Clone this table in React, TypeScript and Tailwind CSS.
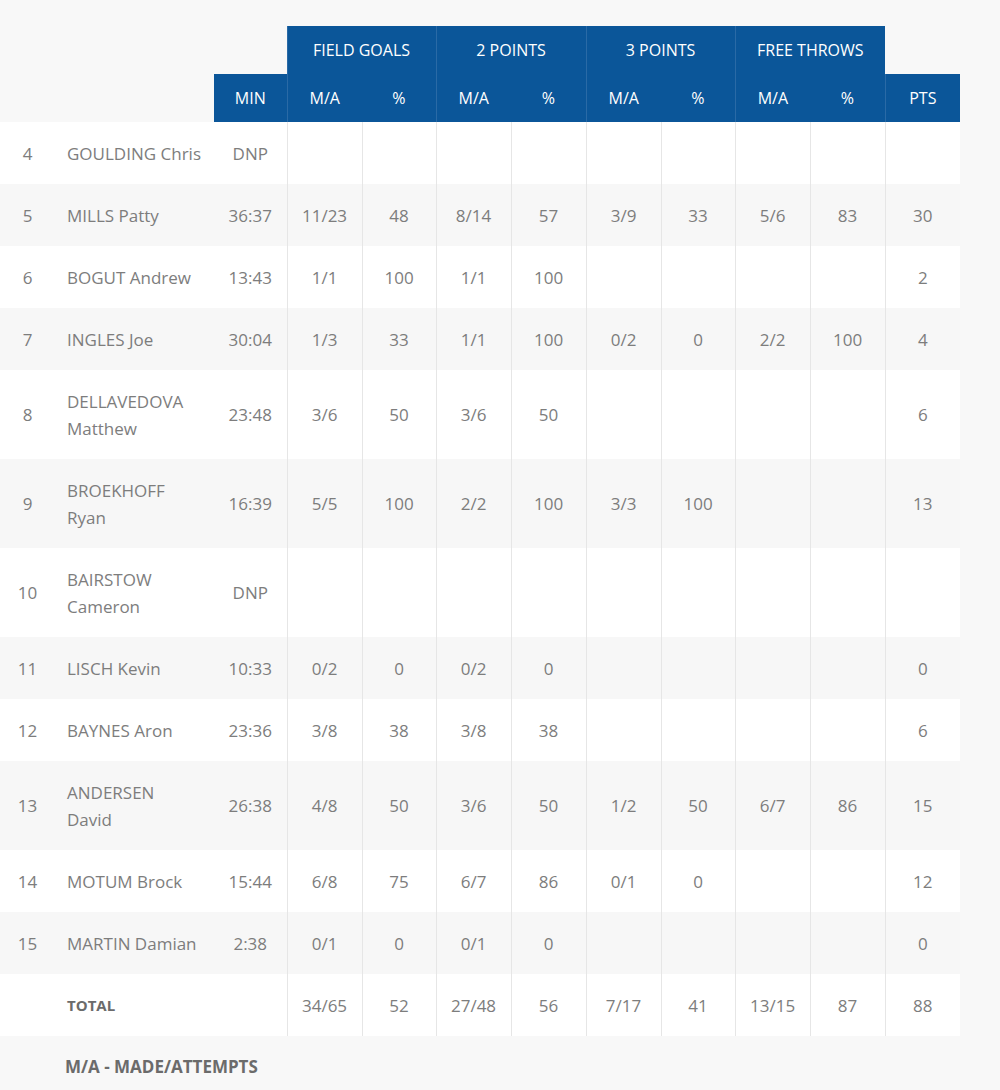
import React from "react";

type Row = {
  no: string;
  name: string[];
  min: string;
  v: string[];
  pts: string;
};

const rows: Row[] = [
  { no: "4", name: ["GOULDING Chris"], min: "DNP", v: ["", "", "", "", "", "", "", ""], pts: "" },
  { no: "5", name: ["MILLS Patty"], min: "36:37", v: ["11/23", "48", "8/14", "57", "3/9", "33", "5/6", "83"], pts: "30" },
  { no: "6", name: ["BOGUT Andrew"], min: "13:43", v: ["1/1", "100", "1/1", "100", "", "", "", ""], pts: "2" },
  { no: "7", name: ["INGLES Joe"], min: "30:04", v: ["1/3", "33", "1/1", "100", "0/2", "0", "2/2", "100"], pts: "4" },
  { no: "8", name: ["DELLAVEDOVA", "Matthew"], min: "23:48", v: ["3/6", "50", "3/6", "50", "", "", "", ""], pts: "6" },
  { no: "9", name: ["BROEKHOFF", "Ryan"], min: "16:39", v: ["5/5", "100", "2/2", "100", "3/3", "100", "", ""], pts: "13" },
  { no: "10", name: ["BAIRSTOW", "Cameron"], min: "DNP", v: ["", "", "", "", "", "", "", ""], pts: "" },
  { no: "11", name: ["LISCH Kevin"], min: "10:33", v: ["0/2", "0", "0/2", "0", "", "", "", ""], pts: "0" },
  { no: "12", name: ["BAYNES Aron"], min: "23:36", v: ["3/8", "38", "3/8", "38", "", "", "", ""], pts: "6" },
  { no: "13", name: ["ANDERSEN", "David"], min: "26:38", v: ["4/8", "50", "3/6", "50", "1/2", "50", "6/7", "86"], pts: "15" },
  { no: "14", name: ["MOTUM Brock"], min: "15:44", v: ["6/8", "75", "6/7", "86", "0/1", "0", "", ""], pts: "12" },
  { no: "15", name: ["MARTIN Damian"], min: "2:38", v: ["0/1", "0", "0/1", "0", "", "", "", ""], pts: "0" },
];

const total = ["34/65", "52", "27/48", "56", "7/17", "41", "13/15", "87"];

const groups = ["FIELD GOALS", "2 POINTS", "3 POINTS", "FREE THROWS"];

const th = "bg-[#0b5699] text-center text-[16px] font-medium text-white";
const td = "py-[17.5px] text-center leading-[27px]";

export default function App() {
  const font = { fontFamily: '"Open Sans", "Liberation Sans", sans-serif' };
  return (
    <div className="min-h-[1090px] w-[1000px] bg-[#f8f8f8] pt-[26px]" style={font}>
      <table className="w-[960px] table-fixed border-collapse text-[17px] text-[#7d7d7d]">
        <colgroup>
          <col className="w-[55px]" />
          <col className="w-[159px]" />
          <col className="w-[73px]" />
          <col className="w-[75px]" />
          <col className="w-[74px]" />
          <col className="w-[75px]" />
          <col className="w-[75px]" />
          <col className="w-[75px]" />
          <col className="w-[74px]" />
          <col className="w-[75px]" />
          <col className="w-[75px]" />
          <col className="w-[75px]" />
        </colgroup>
        <thead>
          <tr className="h-[48px]">
            <th colSpan={3} />
            {groups.map((g) => (
              <th key={g} colSpan={2} className={`${th} border-l border-l-[#2a6aa6]`}>
                {g}
              </th>
            ))}
            <th />
          </tr>
          <tr className="h-[48px]">
            <th colSpan={2} />
            <th className={th}>MIN</th>
            {groups.map((g) => (
              <React.Fragment key={g}>
                <th className={`${th} border-l border-l-[#2a6aa6]`}>M/A</th>
                <th className={th}>%</th>
              </React.Fragment>
            ))}
            <th className={`${th} border-l border-l-[#2a6aa6]`}>PTS</th>
          </tr>
        </thead>
        <tbody>
          {rows.map((r, idx) => (
            <tr key={r.no} className={idx % 2 === 0 ? "bg-white" : "bg-[#f7f7f7]"}>
              <td className={td}>{r.no}</td>
              <td className="py-[17.5px] pl-[12px] text-left leading-[27px]">
                {r.name.map((n) => (
                  <div key={n}>{n}</div>
                ))}
              </td>
              <td className={td}>{r.min}</td>
              {r.v.map((val, i) => (
                <td key={i} className={`${td} border-l border-l-[#e6e6e6]`}>
                  {val}
                </td>
              ))}
              <td className={`${td} border-l border-l-[#e6e6e6]`}>{r.pts}</td>
            </tr>
          ))}
          <tr className="bg-white">
            <td className={td} />
            <td className="py-[17.5px] pl-[12px] text-left text-[15px] font-bold leading-[27px] text-[#6b6b6b]">TOTAL</td>
            <td className={td} />
            {total.map((val, i) => (
              <td key={i} className={`${td} border-l border-l-[#e6e6e6]`}>
                {val}
              </td>
            ))}
            <td className={`${td} border-l border-l-[#e6e6e6]`}>88</td>
          </tr>
        </tbody>
      </table>
      <div className="pl-[65px] pt-[18px] text-[17px] font-bold text-[#6b6b6b]">M/A - MADE/ATTEMPTS</div>
    </div>
  );
}
